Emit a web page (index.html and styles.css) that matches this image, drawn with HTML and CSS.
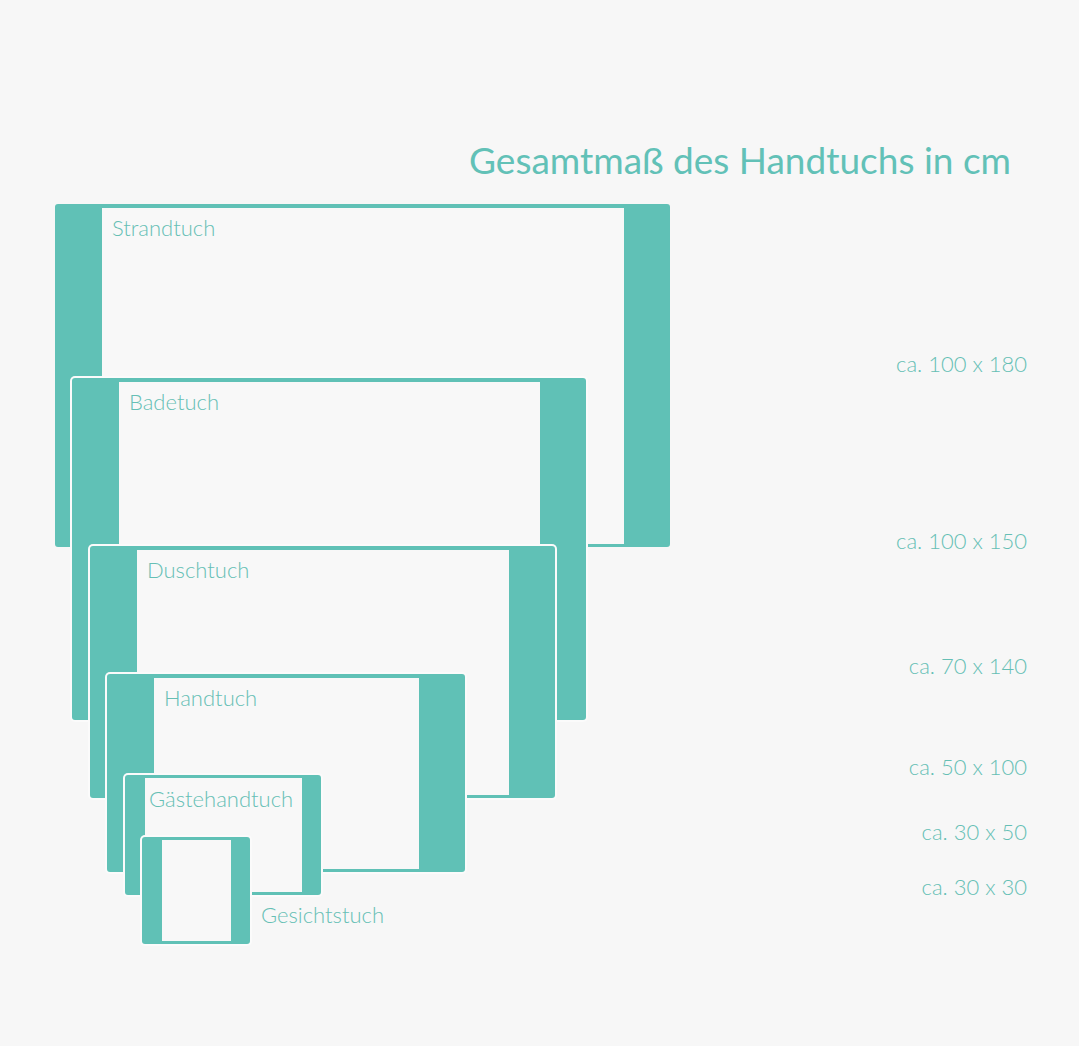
FILE: index.html
```html
<!DOCTYPE html>
<html lang="de">
<head>
<meta charset="utf-8">
<title>Gesamtmaß des Handtuchs in cm</title>
<link rel="stylesheet" href="styles.css">
</head>
<body>
<main class="sheet">
  <h1 class="title">Gesamtmaß des Handtuchs in cm</h1>
  <section class="chart">
    <div class="canvas">
      <div class="towel t-strand"><span class="name">Strandtuch</span></div>
      <div class="towel t-bade"><span class="name">Badetuch</span></div>
      <div class="towel t-dusch"><span class="name">Duschtuch</span></div>
      <div class="towel t-hand"><span class="name">Handtuch</span></div>
      <div class="towel t-gast narrow"><span class="name">Gästehandtuch</span></div>
      <div class="towel t-gesicht narrow"></div>
      <span class="outside-name">Gesichtstuch</span>
    </div>
    <ul class="sizes">
      <li class="s1">ca. 100 x 180</li>
      <li class="s2">ca. 100 x 150</li>
      <li class="s3">ca. 70 x 140</li>
      <li class="s4">ca. 50 x 100</li>
      <li class="s5">ca. 30 x 50</li>
      <li class="s6">ca. 30 x 30</li>
    </ul>
  </section>
</main>
</body>
</html>
```
FILE: styles.css
```css
html, body {
  margin: 0;
  padding: 0;
  background: #f7f7f7;
}
body {
  font-family: Lato, "Open Sans", "Liberation Sans", sans-serif;
  color: #62c1b7;
}
.sheet {
  width: 1079px;
  height: 1046px;
  overflow: hidden;
}
.title {
  margin: 0;
  padding: 136px 68px 0 0;
  text-align: right;
  font-size: 37px;
  font-weight: 400;
  line-height: 48px;
  color: #62c1b7;
  letter-spacing: 0;
}
.chart {
  position: relative;
  height: 820px;
}
.canvas {
  position: absolute;
  left: 0;
  top: 0;
  width: 700px;
  height: 820px;
}
.towel {
  position: absolute;
  box-sizing: border-box;
  background: #f8f8f8;
  border-style: solid;
  border-color: #60c1b6;
  border-width: 4px 46px 3px 47px;
  border-radius: 3px;
  box-shadow: 0 0 0 2px #fbfbfb;
}
.towel.narrow {
  border-width: 3px 19px 3px 20px;
}
.name {
  position: absolute;
  left: 10px;
  top: 7px;
  font-weight: 300;
  font-size: 22px;
  line-height: 26px;
  color: #66bfb5;
  white-space: nowrap;
}
.narrow .name {
  left: 4px;
  top: 8px;
}
/* chart origin: y = 184 */
.t-strand  { left: 55px;  top: 20px;  width: 615px; height: 343px; box-shadow: none; }
.t-bade    { left: 72px;  top: 194px; width: 514px; height: 342px; }
.t-dusch   { left: 90px;  top: 362px; width: 465px; height: 252px; }
.t-hand    { left: 107px; top: 490px; width: 358px; height: 198px; }
.t-gast    { left: 125px; top: 591px; width: 196px; height: 120px; }
.t-gesicht { left: 142px; top: 653px; width: 108px; height: 107px; }
.outside-name {
  position: absolute;
  left: 261px;
  top: 718px;
  font-weight: 300;
  font-size: 22px;
  line-height: 26px;
  color: #66bfb5;
  white-space: nowrap;
}
.sizes {
  list-style: none;
  margin: 0;
  padding: 0;
}
.sizes li {
  position: absolute;
  right: 52px;
  font-size: 22px;
  line-height: 26px;
  font-weight: 300;
  color: #66bfb5;
  white-space: nowrap;
}
.s1 { top: 167px; }
.s2 { top: 344px; }
.s3 { top: 469px; }
.s4 { top: 570px; }
.s5 { top: 635px; }
.s6 { top: 690px; }
```
